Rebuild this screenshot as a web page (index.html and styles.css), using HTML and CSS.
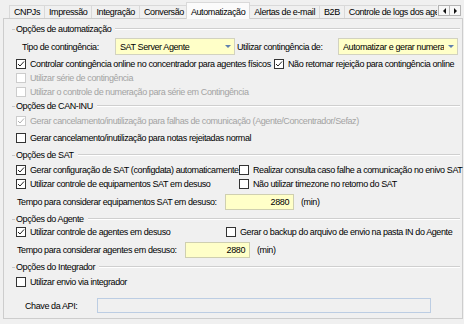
FILE: index.html
```html
<!DOCTYPE html>
<html lang="pt-BR">
<head>
  <meta charset="UTF-8" />
  <meta name="viewport" content="width=device-width, initial-scale=1.0" />
  <title>Configurações</title>
  <link rel="stylesheet" href="styles.css">
</head>
<body>
  <div class="tabs">
    <div class="tab-list">
      <div class="tab">CNPJs</div>
      <div class="tab">Impressão</div>
      <div class="tab">Integração</div>
      <div class="tab">Conversão</div>
      <div class="tab active">Automatização</div>
      <div class="tab">Alertas de e-mail</div>
      <div class="tab">B2B</div>
      <div class="tab">Controle de logs dos agentes</div>
    </div>
    <div class="tab-scroll">
      <span class="scroll-btn"><i class="arrow-left"></i></span>
      <span class="scroll-btn"><i class="arrow-right"></i></span>
    </div>
  </div>

  <div class="panel">
    <!-- Automatização -->
    <div class="group">
      <div class="legend">Opções de automatização</div>
      <div class="row combo-row">
        <span class="combo-label">Tipo de contingência:</span>
        <div class="combo"><span class="combo-text">SAT Server Agente</span><i class="drop"></i></div>
        <span class="combo-label second">Utilizar contingência de:</span>
        <div class="combo"><span class="combo-text">Automatizar e gerar numeração</span><i class="drop"></i></div>
      </div>
      <div class="row check first">
        <div class="cell cell-wide">
          <span class="opt"><span class="box checked"><svg viewBox="0 0 8 8"><path d="M1 4 L3 6 L7 1.5" /></svg></span>Controlar contingência online no concentrador para agentes físicos</span>
        </div>
        <span class="opt"><span class="box checked"><svg viewBox="0 0 8 8"><path d="M1 4 L3 6 L7 1.5" /></svg></span>Não retomar rejeição para contingência online</span>
      </div>
      <div class="row check">
        <span class="opt disabled"><span class="box"></span>Utilizar série de contingência</span>
      </div>
      <div class="row check">
        <span class="opt disabled"><span class="box"></span>Utilizar o controle de numeração para série em Contingência</span>
      </div>
    </div>

    <!-- CAN-INU -->
    <div class="group group-can">
      <div class="legend">Opções de CAN-INU</div>
      <div class="row check first">
        <span class="opt disabled"><span class="box checked"><svg viewBox="0 0 8 8"><path d="M1 4 L3 6 L7 1.5" /></svg></span>Gerar cancelamento/inutilização para falhas de comunicação (Agente/Concentrador/Sefaz)</span>
      </div>
      <div class="row check spaced">
        <span class="opt"><span class="box"></span>Gerar cancelamento/inutilização para notas rejeitadas normal</span>
      </div>
    </div>

    <!-- SAT -->
    <div class="group group-sat">
      <div class="legend">Opções de SAT</div>
      <div class="row check first">
        <div class="cell cell-sat">
          <span class="opt"><span class="box checked"><svg viewBox="0 0 8 8"><path d="M1 4 L3 6 L7 1.5" /></svg></span>Gerar configuração de SAT (configdata) automaticamente</span>
        </div>
        <span class="opt"><span class="box"></span>Realizar consulta caso falhe a comunicação no enivo SAT</span>
      </div>
      <div class="row check">
        <div class="cell cell-sat">
          <span class="opt"><span class="box checked"><svg viewBox="0 0 8 8"><path d="M1 4 L3 6 L7 1.5" /></svg></span>Utilizar controle de equipamentos SAT em desuso</span>
        </div>
        <span class="opt"><span class="box"></span>Não utilizar timezone no retorno do SAT</span>
      </div>
      <div class="row field-row">
        <span class="field-label label-sat">Tempo para considerar equipamentos SAT em desuso:</span>
        <div class="num">2880</div>
        <span class="unit">(min)</span>
      </div>
    </div>

    <!-- Agente -->
    <div class="group group-agent">
      <div class="legend">Opções do Agente</div>
      <div class="row check first">
        <div class="cell cell-agent">
          <span class="opt"><span class="box checked"><svg viewBox="0 0 8 8"><path d="M1 4 L3 6 L7 1.5" /></svg></span>Utilizar controle de agentes em desuso</span>
        </div>
        <span class="opt"><span class="box"></span>Gerar o backup do arquivo de envio na pasta IN do Agente</span>
      </div>
      <div class="row field-row">
        <span class="field-label label-agent">Tempo para considerar agentes em desuso:</span>
        <div class="num num-agent">2880</div>
        <span class="unit">(min)</span>
      </div>
    </div>

    <!-- Integrador -->
    <div class="group group-int">
      <div class="legend">Opções do Integrador</div>
      <div class="row check first">
        <span class="opt"><span class="box"></span>Utilizar envio via integrador</span>
      </div>
      <div class="row api-row">
        <span class="api-label">Chave da API:</span>
        <div class="api-input"></div>
      </div>
    </div>
  </div>
</body>
</html>
```

FILE: styles.css
```css
body {
  margin: 0;
  width: 464px;
  height: 324px;
  overflow: hidden;
  background-color: #f0f0f0;
  font-family: "Liberation Sans", Arial, sans-serif;
  font-size: 9px;
  letter-spacing: -0.4px;
  color: #000;
}

/* tab strip */
.tabs {
  position: relative;
  z-index: 1;
  display: flex;
  height: 18px;
}
.tab-list {
  display: flex;
  align-items: flex-end;
  width: 437px;
  height: 19px;
  padding-left: 9px;
  box-sizing: border-box;
  overflow: hidden;
}
.tab {
  flex: none;
  height: 13px;
  line-height: 12px;
  padding: 0 4px;
  margin-right: -1px;
  margin-bottom: 1px;
  border: 1px solid #d9d9d9;
  border-bottom: none;
  box-sizing: border-box;
  background-color: #f0f0f0;
  white-space: nowrap;
}
.tab.active {
  position: relative;
  height: 17px;
  padding: 3px 4px 0;
  margin: 0 -1px 0 -2px;
  background-color: #fbfbfb;
}
.tab-scroll {
  display: flex;
  margin-top: 5px;
  margin-left: 1px;
}
.scroll-btn {
  display: flex;
  align-items: center;
  justify-content: center;
  width: 12px;
  height: 11px;
  border: 1px solid #b4b4b4;
  box-sizing: border-box;
  background-color: #f7f7f7;
}
.scroll-btn + .scroll-btn {
  margin-left: -1px;
}
.arrow-left,
.arrow-right {
  width: 0;
  height: 0;
  border-top: 3px solid transparent;
  border-bottom: 3px solid transparent;
}
.arrow-left {
  border-right: 3px solid #111;
}
.arrow-right {
  border-left: 3px solid #111;
}

/* page */
.panel {
  width: 460px;
  margin-left: 3px;
  padding: 4px 2px 5px 8px;
  border: 1px solid #cdcdcd;
  box-sizing: border-box;
  background-color: #f0f0f0;
}
.legend {
  display: flex;
  align-items: center;
  height: 12px;
  white-space: nowrap;
}
.legend::before {
  content: "";
  width: 3px;
  margin-right: 1px;
  border-top: 1px solid #c8c8c8;
}
.legend::after {
  content: "";
  flex: 1;
  margin-left: 4px;
  border-top: 1px solid #cfcfcf;
  border-bottom: 1px solid #fff;
}
.group-can {
  margin-top: 1px;
}
.group-sat {
  margin-top: 4px;
}
.group-agent,
.group-int {
  margin-top: 3px;
}

.row {
  display: flex;
  align-items: center;
  padding-left: 4px;
  white-space: nowrap;
}
.check {
  height: 14px;
}
.check.first {
  margin-top: 2px;
}
.group-agent .check.first {
  margin-top: 0;
}
.check.spaced {
  margin-top: 3px;
}
.cell {
  flex: none;
}
.cell-wide {
  width: 258px;
}
.cell-sat {
  width: 223px;
}
.cell-agent {
  width: 210px;
}
.opt {
  display: flex;
  align-items: center;
}
.box {
  flex: none;
  display: flex;
  width: 10px;
  height: 10px;
  margin-right: 4px;
  border: 1px solid #333;
  box-sizing: border-box;
  background-color: #fff;
}
.box svg {
  width: 8px;
  height: 8px;
}
.box path {
  fill: none;
  stroke: #222;
  stroke-width: 1;
}
.opt.disabled {
  color: #a3a3a3;
}
.opt.disabled .box {
  border-color: #cccccc;
}
.opt.disabled .box path {
  stroke: #b0b0b0;
}

/* combos */
.combo-row {
  height: 17px;
  margin-top: 3px;
  padding-left: 10px;
}
.combo-label {
  flex: none;
  width: 93px;
}
.combo-label.second {
  width: 101px;
  margin-left: 2px;
}
.combo {
  flex: none;
  display: flex;
  align-items: center;
  width: 120px;
  height: 17px;
  padding-left: 4px;
  border: 1px solid #d2d2c0;
  box-sizing: border-box;
  background-color: #ffffc8;
}
.combo-text {
  flex: 1;
  overflow: hidden;
}
.drop {
  flex: none;
  display: flex;
  align-items: center;
  justify-content: center;
  width: 13px;
  height: 100%;
}
.drop::after {
  content: "";
  border-left: 3px solid transparent;
  border-right: 3px solid transparent;
  border-top: 3px solid #5f7fae;
}

/* numeric fields */
.field-row {
  height: 16px;
  margin-top: 3px;
  padding-left: 5px;
}
.field-label {
  flex: none;
}
.label-sat {
  width: 208px;
}
.label-agent {
  width: 168px;
}
.num {
  flex: none;
  width: 69px;
  height: 16px;
  line-height: 14px;
  padding-right: 4px;
  border: 1px solid #cfcfb0;
  box-sizing: border-box;
  background-color: #ffffc8;
  text-align: right;
}
.num-agent {
  width: 65px;
}
.unit {
  margin-left: 7px;
}

/* integrador */
.api-row {
  height: 15px;
  margin-top: 9px;
  padding-left: 13px;
}
.api-label {
  flex: none;
  width: 72px;
}
.api-input {
  flex: none;
  width: 334px;
  height: 15px;
  border: 1px solid #bccde3;
  box-sizing: border-box;
  background-color: #f0f0f0;
}
```
